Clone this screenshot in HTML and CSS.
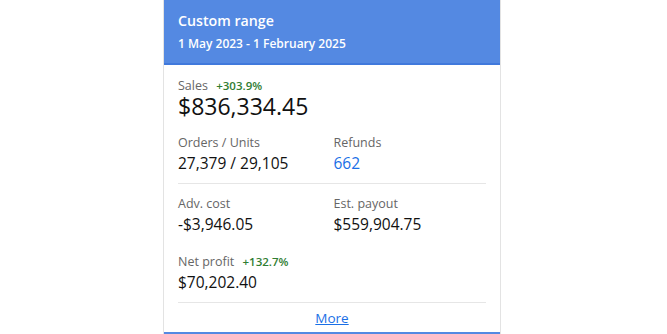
FILE: index.html
```html
<!DOCTYPE html>
<html lang="en">
<head>
    <meta charset="UTF-8">
    <meta name="viewport" content="width=device-width, initial-scale=1.0">
    <title>Custom range</title>
    <link rel="stylesheet" href="styles.css">
</head>
<body>
    <div class="card">
        <div class="card-header">
            <div class="card-title">Custom range</div>
            <div class="card-dates">1 May 2023 - 1 February 2025</div>
        </div>

        <div class="card-body">
            <div class="metric sales">
                <div class="label">Sales <span class="change">+303.9%</span></div>
                <div class="value big">$836,334.45</div>
            </div>

            <div class="row">
                <div class="metric">
                    <div class="label">Orders / Units</div>
                    <div class="value">27,379 / 29,105</div>
                </div>
                <div class="metric">
                    <div class="label">Refunds</div>
                    <div class="value link">662</div>
                </div>
            </div>

            <div class="divider"></div>

            <div class="row">
                <div class="metric">
                    <div class="label">Adv. cost</div>
                    <div class="value">-$3,946.05</div>
                </div>
                <div class="metric">
                    <div class="label">Est. payout</div>
                    <div class="value">$559,904.75</div>
                </div>
            </div>

            <div class="metric net">
                <div class="label">Net profit <span class="change">+132.7%</span></div>
                <div class="value">$70,202.40</div>
            </div>

            <div class="divider"></div>

            <div class="more"><a href="#">More</a></div>
        </div>
    </div>

    <div class="card next">
        <div class="card-header"></div>
    </div>
</body>
</html>
```

FILE: styles.css
```css
* {
    box-sizing: border-box;
    margin: 0;
    padding: 0;
}

body {
    font-family: 'Open Sans', 'Liberation Sans', sans-serif;
    background-color: #fff;
    color: #111;
}

.card {
    width: 338px;
    margin-left: 163px;
    border-left: 1px solid #e3e3e3;
    border-right: 1px solid #e3e3e3;
    background: white;
}

.card-header {
    background-color: #5489e2;
    border-bottom: 2px solid #4079dc;
    color: white;
    padding: 11px 14px 9px;
    font-weight: 600;
}

.card-title {
    font-size: 14.2px;
    line-height: 20px;
}

.card-dates {
    font-size: 12px;
    line-height: 20px;
    margin-top: 3px;
}

.card-body {
    padding: 13px 14px 0;
}

.label {
    font-size: 12.5px;
    line-height: 18px;
    color: #666;
}

.sales .label {
    line-height: 16px;
}

.change {
    font-size: 11.5px;
    font-weight: 600;
    color: #2f7d32;
    margin-left: 5px;
}

.value {
    font-size: 15.5px;
    line-height: 22px;
    color: #111;
}

.value.big {
    font-size: 23px;
    line-height: 24px;
}

.value.link {
    color: #1a6fe6;
}

.row {
    display: flex;
    margin-top: 16px;
}

.row .metric {
    flex: 1;
}

.row .metric + .metric {
    padding-left: 3px;
}

.divider {
    height: 1px;
    background: #e6e6e6;
    margin-top: 9px;
}

.divider + .row {
    margin-top: 11px;
}

.net {
    margin-top: 18px;
}

.more {
    text-align: center;
    font-size: 13.5px;
    line-height: 20px;
    padding: 5px 0 4px;
}

.more a {
    color: #1a6fe6;
}

.card.next .card-header {
    padding: 0;
    height: 10px;
    border-bottom: none;
}
```
